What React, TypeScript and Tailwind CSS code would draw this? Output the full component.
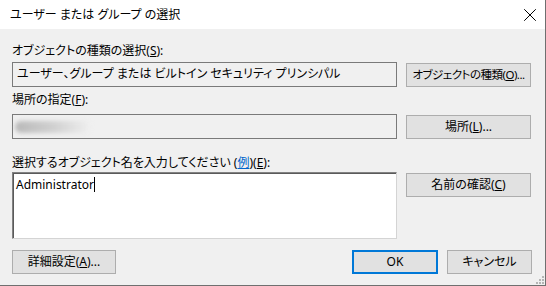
import { X } from 'lucide-react';

const font = "font-['Noto_Sans','Noto_Sans_CJK_JP',sans-serif] [font-feature-settings:'palt']";

function Btn({ children, className = '' }: { children: React.ReactNode; className?: string }) {
  return (
    <div
      className={`h-[24px] shrink-0 flex items-center justify-center whitespace-nowrap bg-[#e1e1e1] border border-[#adadad] text-[12px] leading-[16px] text-black ${className}`}
    >
      {children}
    </div>
  );
}

export default function App() {
  return (
    <div className={`w-[546px] h-[286px] flex flex-col bg-[#f0f0f0] border-r border-b border-[#6f6f6f] relative ${font}`}>
      {/* title bar */}
      <div className="h-[29px] shrink-0 bg-white flex items-center justify-between pl-[10px] pr-[4px]">
        <span className="text-[12px] leading-[16px] text-black">ユーザー または グループ の選択</span>
        <X size={22} strokeWidth={1} absoluteStrokeWidth className="text-black" />
      </div>

      <div className="flex flex-col pl-[12px] pr-[13px] text-[12px] leading-[16px] text-black">
        <div className="mt-[14px] h-[16px]">
          オブジェクトの種類の選択(<u>S</u>):
        </div>
        <div className="mt-[3px] flex gap-[9px]">
          <div className="w-[385px] h-[25px] shrink-0 border border-[#7a7a7a] bg-[#f0f0f0] pl-[4px] pt-[3px]">
            ユーザー、グループ または ビルトイン セキュリティ プリンシパル
          </div>
          <Btn className="w-[125px] mt-[1px] !text-[11.5px] tracking-[-0.5px]">
            オブジェクトの種類(<u>O</u>)...
          </Btn>
        </div>

        <div className="mt-[5px] h-[16px]">
          場所の指定(<u>F</u>):
        </div>
        <div className="mt-[6px] flex gap-[9px]">
          <div className="w-[385px] h-[25px] shrink-0 border border-[#7a7a7a] bg-[#f0f0f0] pl-[2px] pt-[6px]">
            <div className="w-[76px] h-[12px] bg-linear-to-r from-[#b9b9b9] via-[#d0d0d0] to-[#f0f0f0] blur-[2px] rounded-full" />
          </div>
          <Btn className="w-[125px] mt-[1px]">
            場所(<u>L</u>)...
          </Btn>
        </div>

        <div className="mt-[16px] h-[16px]">
          選択するオブジェクト名を入力してください (<u className="text-[#0066cc]">例</u>)(<u>E</u>):
        </div>
        <div className="mt-[1px] flex gap-[9px]">
          <div className="w-[385px] h-[67px] shrink-0 bg-white border border-t-[#828282] border-l-[#828282] border-r-[#d4d4d4] border-b-[#d4d4d4] shadow-[inset_1px_1px_0_#5a5a5a] pl-[3px] pt-[4px]">
            <span>Administrator</span>
            <span className="inline-block w-px h-[15px] bg-black align-[-3px]" />
          </div>
          <Btn className="w-[125px] mt-[1px]">
            名前の確認(<u>C</u>)
          </Btn>
        </div>

        <div className="mt-[11px] flex items-center">
          <Btn className="w-[104px]">
            詳細設定(<u>A</u>)...
          </Btn>
          <div className="flex-1" />
          <div className="w-[86px] h-[24px] flex items-center justify-center bg-[#e1e1e1] border-2 border-[#0078d7]">
            OK
          </div>
          <Btn className="w-[85px] ml-[9px]">キャンセル</Btn>
        </div>
      </div>

      {/* resize grip */}
      <svg className="absolute right-[1px] bottom-[1px]" width="8" height="8" viewBox="0 0 8 8">
        <g fill="#b5b5b5">
          <rect x="6" y="0" width="2" height="2" />
          <rect x="3" y="3" width="2" height="2" />
          <rect x="6" y="3" width="2" height="2" />
          <rect x="0" y="6" width="2" height="2" />
          <rect x="3" y="6" width="2" height="2" />
          <rect x="6" y="6" width="2" height="2" />
        </g>
      </svg>
    </div>
  );
}
